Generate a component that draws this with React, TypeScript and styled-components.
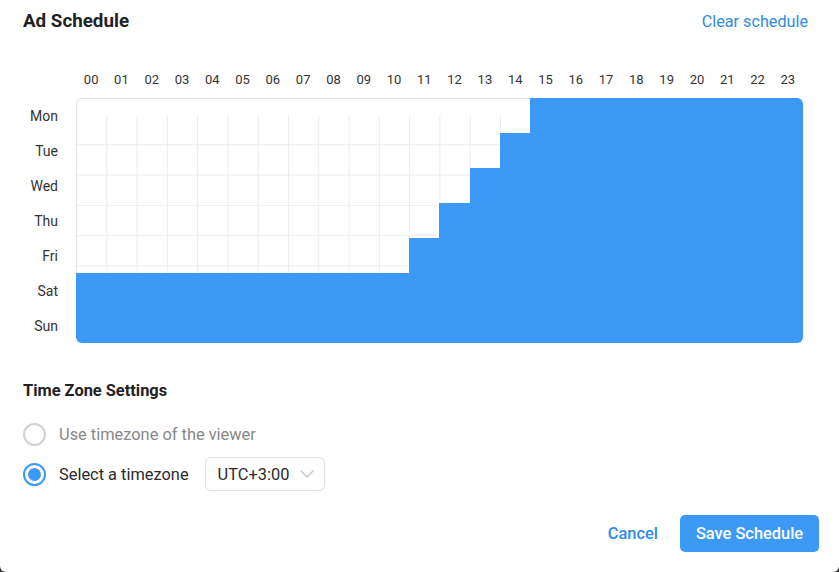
import React from "react";
import styled, { createGlobalStyle } from "styled-components";

const GlobalStyle = createGlobalStyle`
  html, body {
    margin: 0;
    padding: 0;
    background: #3a3a3a;
  }
  body {
    font-family: Roboto, "Liberation Sans", Arial, sans-serif;
    -webkit-font-smoothing: antialiased;
  }
  * { box-sizing: border-box; }
`;

const BLUE = "#3d99f6";
const LINK = "#2f8be4";

const Page = styled.div`
  width: 839px;
  height: 572px;
  background: #fff;
  border-bottom-left-radius: 6px;
  border-bottom-right-radius: 6px;
  padding: 10px 20px 0 23px;
  display: flex;
  flex-direction: column;
`;

const HeaderRow = styled.div`
  display: flex;
  align-items: center;
  justify-content: space-between;
  height: 22px;
  padding-right: 11px;
`;

const Title = styled.h1`
  margin: 0;
  font-size: 18.8px;
  font-weight: 700;
  color: #222;
  line-height: 20px;
`;

const LinkButton = styled.button`
  border: none;
  background: none;
  padding: 0;
  font-family: inherit;
  font-size: 16.2px;
  color: ${LINK};
  line-height: 20px;
  margin-top: 2px;
  cursor: pointer;
`;

const Schedule = styled.div`
  margin-top: 40px;
  display: grid;
  grid-template-columns: 35px 727px;
  grid-template-rows: 16px 245px;
  column-gap: 18px;
  row-gap: 10px;
`;

const HourRow = styled.div`
  grid-column: 2;
  display: grid;
  grid-template-columns: repeat(24, 1fr);
`;

const HourLabel = styled.span`
  text-align: center;
  font-size: 13px;
  line-height: 16px;
  color: #333;
`;

const DayColumn = styled.div`
  grid-column: 1;
  display: grid;
  grid-template-rows: repeat(7, 35px);
`;

const DayLabel = styled.span`
  display: flex;
  align-items: center;
  justify-content: flex-end;
  font-size: 14px;
  color: #333;
`;

const Board = styled.div`
  grid-column: 2;
  border-radius: 6px;
  overflow: hidden;
  box-shadow: inset 0 0 0 1px #e2e2e2;
  background-color: #fff;
  background-image:
    linear-gradient(#fff, #fff),
    linear-gradient(to right, #ececec 1px, transparent 1px),
    linear-gradient(to bottom, transparent 29.29px, #ececec 29.29px);
  background-size:
    calc(100% - 2px) 17px,
    calc(100% / 24) 100%,
    100% 30.29px;
  background-position:
    1px 1px,
    0 0,
    0 17px;
  background-repeat: no-repeat, repeat, repeat;
  display: grid;
  grid-template-columns: repeat(24, 1fr);
  grid-template-rows: repeat(7, 1fr);
`;

const Cell = styled.div<{ $on: boolean }>`
  background: ${(p) => (p.$on ? BLUE : "transparent")};
`;

const SectionTitle = styled.h2`
  margin: 39px 0 0;
  font-size: 16.4px;
  font-weight: 700;
  color: #222;
  line-height: 18px;
`;

const RadioList = styled.div`
  margin-top: 22px;
  display: flex;
  flex-direction: column;
  gap: 11px;
`;

const RadioRow = styled.label<{ $h: number }>`
  display: flex;
  align-items: center;
  height: ${(p) => p.$h}px;
  cursor: pointer;
`;

const RadioCircle = styled.span<{ $checked: boolean }>`
  width: 23px;
  height: 23px;
  border-radius: 50%;
  border: 2px solid ${(p) => (p.$checked ? BLUE : "#d2d2d2")};
  display: flex;
  align-items: center;
  justify-content: center;
  flex-shrink: 0;
  &::after {
    content: "";
    width: 13px;
    height: 13px;
    border-radius: 50%;
    background: ${(p) => (p.$checked ? BLUE : "transparent")};
  }
`;

const RadioText = styled.span<{ $muted: boolean }>`
  margin-left: 13px;
  font-size: 16.4px;
  color: ${(p) => (p.$muted ? "#888" : "#2a2a2a")};
`;

const Select = styled.div`
  margin-left: 16px;
  width: 120px;
  height: 34px;
  border: 1px solid #e0e0e0;
  border-radius: 6px;
  display: flex;
  align-items: center;
  justify-content: space-between;
  padding: 0 10px 0 12px;
  font-size: 16.4px;
  color: #2a2a2a;
`;

const Footer = styled.div`
  margin-top: 24px;
  display: flex;
  justify-content: flex-end;
  align-items: center;
  gap: 22px;
`;

const CancelButton = styled.button`
  border: none;
  background: none;
  padding: 0;
  font-family: inherit;
  font-size: 16.4px;
  font-weight: 500;
  color: ${LINK};
  cursor: pointer;
`;

const PrimaryButton = styled.button`
  border: none;
  background: ${BLUE};
  color: #fff;
  font-family: inherit;
  font-size: 16.4px;
  font-weight: 500;
  height: 37px;
  width: 139px;
  border-radius: 5px;
  cursor: pointer;
`;

const hours = Array.from({ length: 24 }, (_, i) => String(i).padStart(2, "0"));
const days = ["Mon", "Tue", "Wed", "Thu", "Fri", "Sat", "Sun"];
const startCol = [15, 14, 13, 12, 11, 0, 0];

export default function App() {
  return (
    <>
      <GlobalStyle />
      <Page>
        <HeaderRow>
          <Title>Ad Schedule</Title>
          <LinkButton>Clear schedule</LinkButton>
        </HeaderRow>

        <Schedule>
          <HourRow>
            {hours.map((h) => (
              <HourLabel key={h}>{h}</HourLabel>
            ))}
          </HourRow>
          <DayColumn>
            {days.map((d) => (
              <DayLabel key={d}>{d}</DayLabel>
            ))}
          </DayColumn>
          <Board>
            {days.map((d, r) =>
              hours.map((h, c) => <Cell key={d + h} $on={c >= startCol[r]} />)
            )}
          </Board>
        </Schedule>

        <SectionTitle>Time Zone Settings</SectionTitle>
        <RadioList>
          <RadioRow $h={24}>
            <RadioCircle $checked={false} />
            <RadioText $muted>Use timezone of the viewer</RadioText>
          </RadioRow>
          <RadioRow $h={34}>
            <RadioCircle $checked />
            <RadioText $muted={false}>Select a timezone</RadioText>
            <Select>
              <span>UTC+3:00</span>
              <svg width="14" height="8" viewBox="0 0 14 8">
                <polyline
                  points="1,1 7,7 13,1"
                  fill="none"
                  stroke="#c4c4c4"
                  strokeWidth="1.4"
                  strokeLinecap="round"
                  strokeLinejoin="round"
                />
              </svg>
            </Select>
          </RadioRow>
        </RadioList>

        <Footer>
          <CancelButton>Cancel</CancelButton>
          <PrimaryButton>Save Schedule</PrimaryButton>
        </Footer>
      </Page>
    </>
  );
}
